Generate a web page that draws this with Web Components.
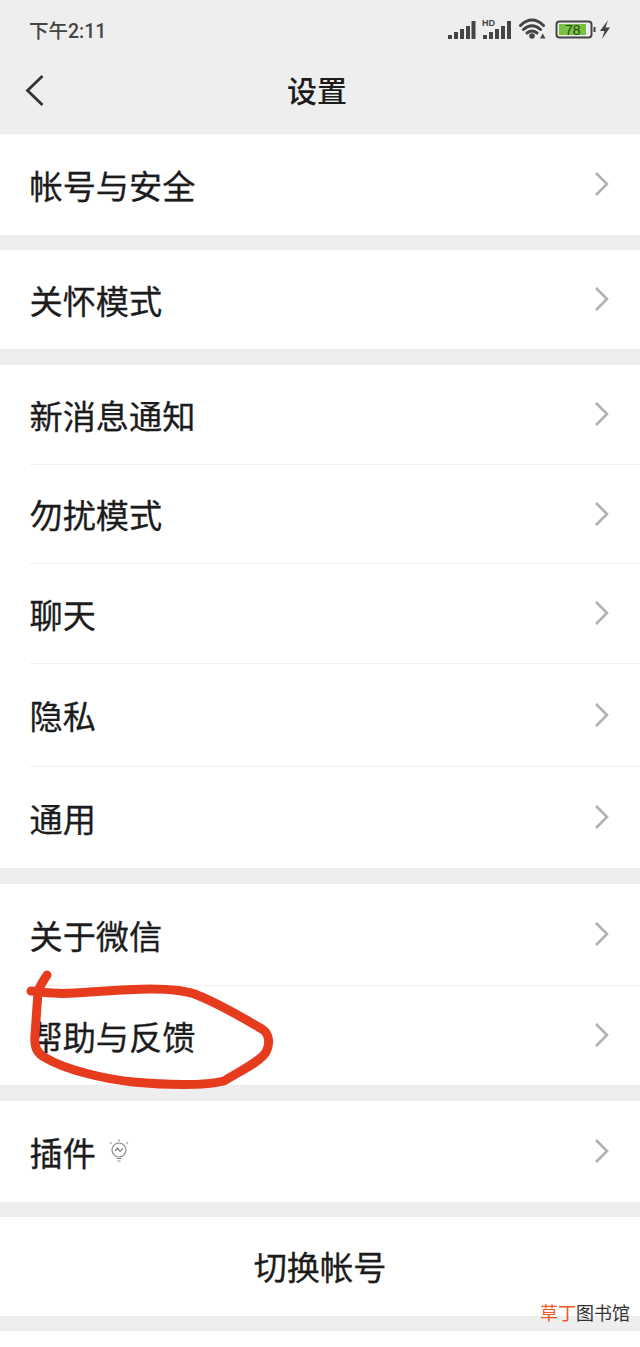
<!DOCTYPE html>
<html lang="zh">
<head>
<meta charset="utf-8">
<title>设置</title>
<style>
  html, body { margin: 0; padding: 0; background: #eeeeee; }
  body { font-family: "Noto Sans CJK SC", "Noto Sans", sans-serif; color: #1c1c1c; }
</style>
</head>
<body>
<settings-page>
  <status-bar slot="top"></status-bar>
  <nav-bar slot="top">设置</nav-bar>

  <settings-group>
    <settings-row h="101">帐号与安全</settings-row>
  </settings-group>
  <settings-group>
    <settings-row h="99">关怀模式</settings-row>
  </settings-group>
  <settings-group wide>
    <settings-row h="100" line>新消息通知</settings-row>
    <settings-row h="99" line>勿扰模式</settings-row>
    <settings-row h="100" line>聊天</settings-row>
    <settings-row h="103" line>隐私</settings-row>
    <settings-row h="101">通用</settings-row>
  </settings-group>
  <settings-group wide>
    <settings-row h="102" line>关于微信</settings-row>
    <settings-row h="99">帮助与反馈</settings-row>
  </settings-group>
  <settings-group wide>
    <settings-row h="101">插件<bulb-icon slot="extra"></bulb-icon></settings-row>
  </settings-group>
  <settings-group>
    <settings-row h="99" center>切换帐号</settings-row>
  </settings-group>
  <settings-group></settings-group>
</settings-page>

<script>
// page shell, holds the red pen mark and the watermark on top of the list
class SettingsPage extends HTMLElement {
  constructor() {
    super();
    this.attachShadow({ mode: 'open' }).innerHTML = `
      <style>
        :host { display: block; position: relative; width: 640px; height: 1347px; overflow: hidden; background: #eeeeee; }
        .list { display: flex; flex-direction: column; gap: 15px; }
        .ink { position: absolute; left: 0; top: 960px; }
        .mark { position: absolute; right: 10px; top: 1299px; font-size: 18px; line-height: 26px; color: #333; }
        .mark b { font-weight: 400; color: #ee5a24; }
      </style>
      <slot name="top"></slot>
      <div class="list"><slot></slot></div>
      <svg class="ink" width="300" height="140" viewBox="0 960 300 140" fill="none">
        <path d="M31 991C45 993 60 994 75 993C95 992 125 989 150 989C170 989 185 990 197 995C215 1002 245 1019 262 1029C270 1034 270 1045 266 1052C260 1062 240 1071 224 1081C205 1086 165 1085 133 1082C105 1079 65 1070 44 1057C36 1052 34 1046 35 1035C36 1020 37 1005 38 992C40 985 44 980 47 975"
          stroke="#e63b1c" stroke-width="9" stroke-linecap="round" stroke-linejoin="round"/>
      </svg>
      <div class="mark"><b>草丁</b>图书馆</div>
    `;
  }
}

class StatusBar extends HTMLElement {
  constructor() {
    super();
    this.attachShadow({ mode: 'open' }).innerHTML = `
      <style>
        :host { display: flex; align-items: center; justify-content: space-between; height: 60px; padding: 0 27px 0 29px; box-sizing: border-box; }
        .time { font-size: 19.500px; color: #444; font-family: "Roboto", "Noto Sans CJK SC", sans-serif; font-weight: 500; position: relative; top: -1px; }
        svg { display: block; }
        text { font-family: "Liberation Sans", sans-serif; font-weight: 700; }
      </style>
      <span class="time">下午2:11</span>
      <svg width="166" height="26" viewBox="448 17 166 26">
        <g fill="#444">
          <rect x="449" y="35" width="4" height="4"/><rect x="455" y="32" width="4" height="7"/>
          <rect x="461" y="29" width="4" height="10"/><rect x="467" y="26" width="4" height="13"/><rect x="472.500" y="21" width="4" height="18"/>
          <rect x="484" y="35" width="4" height="4"/><rect x="490" y="32" width="4" height="7"/>
          <rect x="496" y="29" width="4" height="10"/><rect x="502" y="26" width="4" height="13"/><rect x="508" y="21" width="4" height="18"/>
          <text x="483" y="26" font-size="9">HD</text>
          <circle cx="533" cy="36" r="2.800"/>
          <path d="M541 38.500h5.500l-2.700-5z"/>
        </g>
        <g fill="none" stroke="#444" stroke-width="3" stroke-linecap="round">
          <path d="M521.500 25.500Q533 14.500 544.500 25.500"/>
          <path d="M524.500 29.500Q533 22 541.500 29.500"/>
          <path d="M528 33Q533 29 538 33"/>
        </g>
        <rect x="557.500" y="21.500" width="35" height="16" rx="3" fill="none" stroke="#444" stroke-width="2"/>
        <rect x="560" y="24" width="27" height="11" fill="#7ac143"/>
        <text x="566" y="35" font-size="14" fill="#1f4a12" style="font-weight:400">78</text>
        <rect x="594.500" y="27" width="2" height="5" fill="#444"/>
        <path d="M609 20L601 31H605.500L603 39L611 27.500H606.500Z" fill="#444"/>
      </svg>
    `;
  }
}

class NavBar extends HTMLElement {
  constructor() {
    super();
    this.attachShadow({ mode: 'open' }).innerHTML = `
      <style>
        :host { display: flex; align-items: center; justify-content: center; position: relative; height: 74px; box-sizing: border-box; padding: 0 6px 15px 0; border-bottom: 1px solid #e8e8e8; }
        .title { font-size: 30px; font-weight: 500; color: #1c1c1c; line-height: 40px; }
        svg { position: absolute; left: 25px; top: 14px; }
      </style>
      <svg width="20" height="32" viewBox="0 0 20 32" fill="none"><path d="M17.500 2L2.500 16.500L17.500 31" stroke="#333" stroke-width="2.800"/></svg>
      <span class="title"><slot></slot></span>
    `;
  }
}

class SettingsGroup extends HTMLElement {
  constructor() {
    super();
    this.attachShadow({ mode: 'open' }).innerHTML = `
      <style>
        :host { display: flex; flex-direction: column; background: #fff; min-height: 16px; }
        :host([wide]) { margin-top: 1px; }
      </style>
      <slot></slot>
    `;
  }
}

class SettingsRow extends HTMLElement {
  constructor() {
    super();
    this.attachShadow({ mode: 'open' }).innerHTML = `
      <style>
        :host { display: block; box-sizing: border-box; padding-left: 29.500px; background: #fff; font-size: 33.200px; color: #1c1c1c; -webkit-text-stroke: 0.3px #1c1c1c; }
        .inner { display: flex; align-items: center; gap: 13px; height: 100%; box-sizing: border-box; padding-right: 31px; padding-bottom: 1px; }
        :host([line]) .inner { border-bottom: 1px solid #efefef; }
        .chev { margin-left: auto; display: block; }
        :host([center]) { padding-left: 0; }
        :host([center]) .inner { justify-content: center; padding-right: 0; padding-bottom: 2px; }
        :host([center]) .chev { display: none; }
      </style>
      <div class="inner">
        <span><slot></slot></span>
        <slot name="extra"></slot>
        <svg class="chev" width="15" height="26" viewBox="0 0 15 26" fill="none"><path d="M2 2L13 13L2 24" stroke="#b0b0b0" stroke-width="2.600"/></svg>
      </div>
    `;
  }

  connectedCallback() {
    this.style.height = this.getAttribute('h') + 'px';
  }
}

class BulbIcon extends HTMLElement {
  constructor() {
    super();
    this.attachShadow({ mode: 'open' }).innerHTML = `
      <style>
        :host { display: block; width: 20px; height: 24px; }
        svg { display: block; }
      </style>
      <svg width="20" height="24" viewBox="0 0 20 24" fill="none" stroke="#8a8a8a" stroke-width="1.200">
        <circle cx="10" cy="11" r="7"/>
        <path d="M6 12L8.500 9L11 12.500L14 9.500"/>
        <path d="M7.500 19.500H12.500M8.500 22H11.500"/>
        <path d="M10 0.500V2.500M1 3.500L2.500 4.500M19 3.500L17.500 4.500"/>
      </svg>
    `;
  }
}

customElements.define('settings-page', SettingsPage);
customElements.define('status-bar', StatusBar);
customElements.define('nav-bar', NavBar);
customElements.define('settings-group', SettingsGroup);
customElements.define('settings-row', SettingsRow);
customElements.define('bulb-icon', BulbIcon);
</script>
</body>
</html>
